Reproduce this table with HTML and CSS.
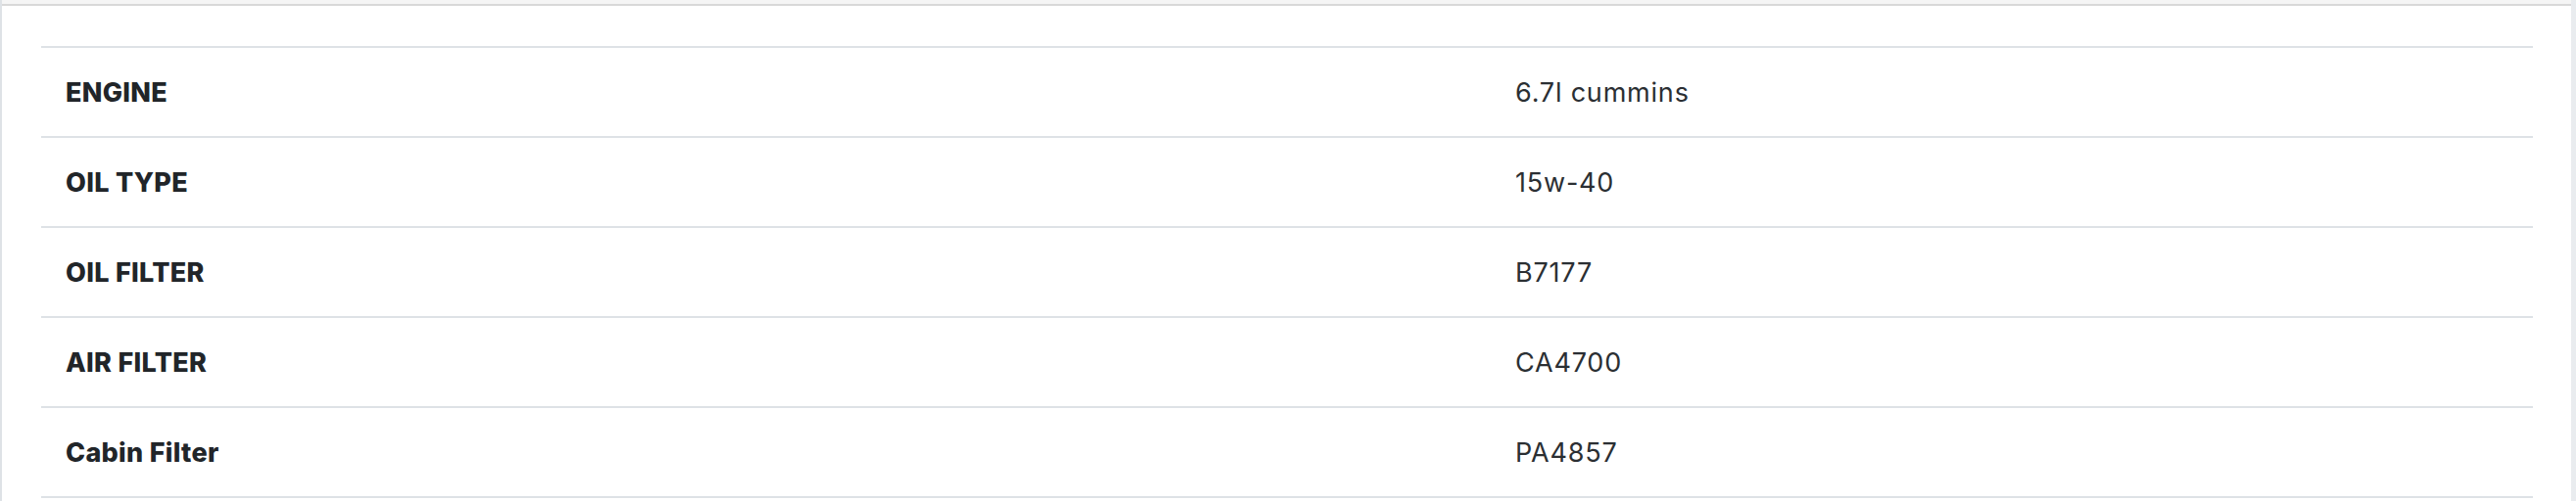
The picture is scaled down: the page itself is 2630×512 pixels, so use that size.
FILE: index.html
```html
<!DOCTYPE html>
<html lang="en">
<head>
    <meta charset="UTF-8">
    <meta name="viewport" content="width=device-width, initial-scale=1.0">
    <title>Vehicle Specs</title>
    <link rel="stylesheet" href="styles.css">
</head>

<body>
    <div class="panel">
        <div class="panel-top"></div>

        <div class="panel-body">
            <table class="specs">
                <tr>
                    <th>ENGINE</th>
                    <td>6.7l cummins</td>
                </tr>
                <tr>
                    <th>OIL TYPE</th>
                    <td>15w-40</td>
                </tr>
                <tr>
                    <th>OIL FILTER</th>
                    <td>B7177</td>
                </tr>
                <tr>
                    <th>AIR FILTER</th>
                    <td>CA4700</td>
                </tr>
                <tr>
                    <th>Cabin Filter</th>
                    <td>PA4857</td>
                </tr>
            </table>
        </div>
    </div>
</body>

</html>
```

FILE: styles.css
```css
 body {
     margin: 0;
     font-family: "Inter", "Open Sans", sans-serif;
     background-color: #fff;
     color: #212529;
 }

 .panel {
     height: 512px;
     box-sizing: border-box;
     border-left: 2px solid #dee2e6;
     border-right: 5px solid #e9ecef;
 }

 .panel-top {
     height: 4px;
     background-color: #f5f5f5;
     border-bottom: 2px solid #d8d8d8;
 }

 .panel-body {
     padding: 41px 39px 0 40px;
 }

 table.specs {
     width: 100%;
     border-collapse: collapse;
 }

 .specs th,
 .specs td {
     height: 90px;
     padding: 0 25px;
     border-top: 2px solid #dee2e6;
     border-bottom: 2px solid #dee2e6;
     text-align: left;
     vertical-align: middle;
     font-size: 27px;
 }

 .specs th {
     width: 1430px;
     font-weight: 800;
     letter-spacing: 0.3px;
 }

 .specs td {
     font-weight: 400;
     letter-spacing: 0.8px;
     color: #2b2f33;
 }
```
